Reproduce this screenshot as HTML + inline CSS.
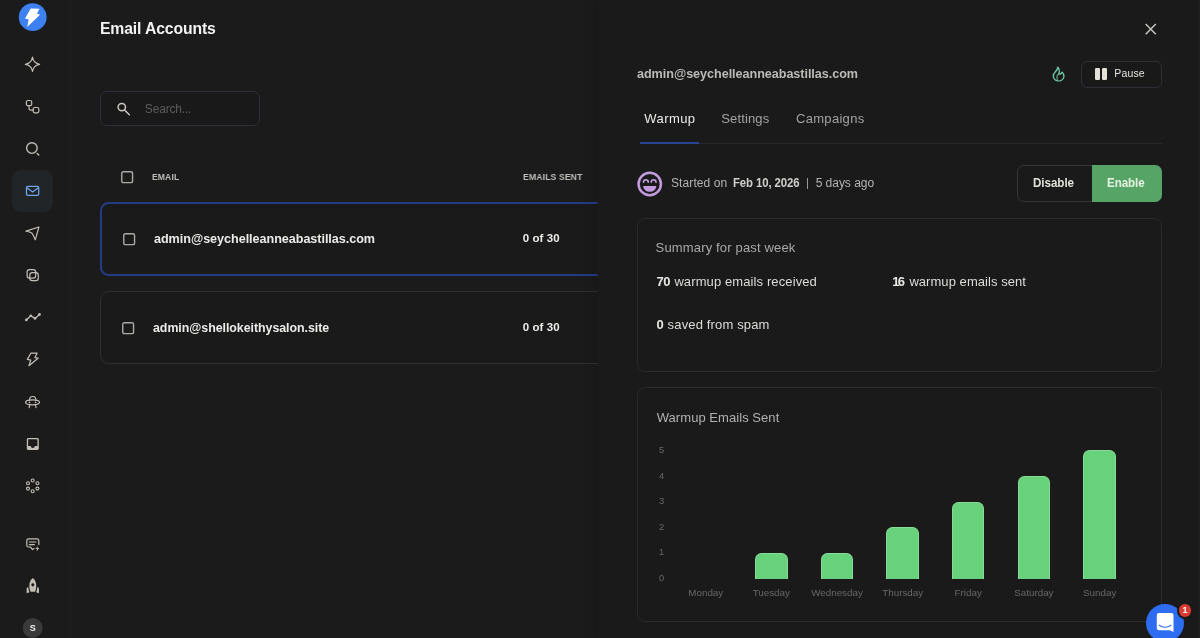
<!DOCTYPE html>
<html lang="en">
<head>
<meta charset="utf-8">
<title>Email Accounts</title>
<style>
*{box-sizing:border-box;margin:0;padding:0}
html,body{width:1200px;height:638px;overflow:hidden;background:#1b1b1b;font-family:"Liberation Sans",sans-serif;color:#e8e8e8}
#app{position:relative;width:1200px;height:638px;overflow:hidden;will-change:transform}
.t{position:absolute;white-space:nowrap;line-height:1}
.a{position:absolute}
#side{position:absolute;left:0;top:0;width:72px;height:638px;background:linear-gradient(90deg,#1b1b1b 0,#1b1b1b 68px,#1d1d1d 68px,#1d1d1d 72px)}
#sideicons{position:absolute;left:0;top:0;width:69px;height:638px}
#search{position:absolute;left:100px;top:91px;width:160px;height:35px;border:1px solid #2e313a;border-radius:7px;background:#191919}
.cb{position:absolute;width:12.5px;height:12.5px;border:1.500px solid #b3afa8;border-radius:2px}
.row{position:absolute;left:100px;width:520px;border-radius:8.500px;background:#1a1a1a}
#panel{position:absolute;left:598px;top:0;width:602px;height:638px;background:#1a1a1a;box-shadow:-3px 0 12px rgba(0,0,0,.14)}
.card{position:absolute;left:636.5px;width:525.5px;border:1px solid #292b31;border-radius:8px;background:#1a1a1a}
.ax{position:absolute;white-space:nowrap;line-height:1;font-size:9.3px;color:#686868}
.xl{transform:translateX(-50%);font-size:9.800px}
.bar{position:absolute;width:32.6px;background:#67d17b;border:1px solid #86dc96;border-bottom:none;border-radius:6.5px 6.5px 0 0}
</style>
</head>
<body>
<div id="app">

<!-- ============ SIDEBAR ============ -->
<div id="side"></div>
<svg id="sideicons" viewBox="0 0 69 638" fill="none" stroke-linecap="round" stroke-linejoin="round">
  <!-- logo -->
  <circle cx="32.7" cy="17.2" r="13.9" fill="#3d80f0"/>
  <polygon points="30.7,8.5 39.5,8.7 37,13.5 40,14.7 27.2,27 28.7,19.4 25,18.5" fill="#ffffff"/>
  <g stroke="#c2beb7" stroke-width="1.200">
    <!-- sparkle -->
    <path d="M32.5 57.2C33.2 61.6 35.2 63.6 39.6 64.3C35.2 65 33.2 67 32.5 71.4C31.8 67 29.800 65 25.400 64.300C29.8 63.6 31.8 61.6 32.5 57.2Z"/>
    <!-- flow -->
    <rect x="26.4" y="100.500" width="5.300" height="5.200" rx="1.500"/>
    <rect x="33.200" y="107.500" width="5.600" height="5.300" rx="1.500"/>
    <path d="M29 105.800V108.300Q29 110.200 30.900 110.200H33.200"/>
    <!-- search -->
    <circle cx="31.900" cy="148.100" r="5.300" stroke-width="1.400"/>
    <path d="M37.200 153.500L38.800 155" stroke-width="1.400"/>
    <!-- send -->
    <path d="M38.900 227L25.900 231.100Q30.400 231.900 31.700 232.900Q33.400 235 35.300 239.800Z"/>
    <!-- copy -->
    <rect x="27.100" y="269.700" width="8.600" height="8.400" rx="2.400"/>
    <rect x="29.800" y="272.600" width="8.500" height="8" rx="2.400"/>
    <!-- chart -->
    <path d="M26.300 319.900L30.800 315.700L35 318.400L39.500 314.400" stroke-width="1.300"/>
    <!-- bolt outline -->
    <path d="M30.800 353.200H37.100L34.900 357.600L38.100 358.200L28.900 365.700L30.800 360.100L27.300 359.400Z" stroke-width="1.200"/>
    <!-- ufo -->
    <ellipse cx="32.550" cy="402.300" rx="7" ry="2.500"/>
    <path d="M29.500 400.300C29.500 397.700 30.800 396.500 32.700 396.500C34.600 396.500 35.900 397.700 35.900 400.300"/>
    <path d="M29.700 404.900L29.200 407.700M35.400 404.900L36.100 407.700"/>
    <!-- dots -->
    <g stroke-width="1.100">
      <circle cx="32.700" cy="480.500" r="1.500"/><circle cx="37.400" cy="483.200" r="1.500"/><circle cx="37.400" cy="488.600" r="1.500"/>
      <circle cx="32.700" cy="491.200" r="1.500"/><circle cx="28" cy="488.600" r="1.500"/><circle cx="28" cy="483.200" r="1.500"/>
    </g>
    <!-- chat bolt -->
    <path d="M38.800 544.400V540.600Q38.800 538.800 37 538.800H28.600Q26.800 538.800 26.800 540.600V545.200Q26.800 547 28.600 547H30.400L32.600 549.600L34 548.600"/>
    <path d="M29.400 542H35.800M29.400 544.700H34.400" stroke-width="1.200"/>
  </g>
  <g fill="#c2beb7">
    <circle cx="26.300" cy="319.900" r="1.300"/><circle cx="30.800" cy="315.700" r="1.300"/><circle cx="35" cy="318.400" r="1.300"/><circle cx="39.500" cy="314.400" r="1.300"/>
    <circle cx="29.500" cy="402.400" r=".8"/><circle cx="35.600" cy="402.400" r=".8"/>
    <polygon points="37.700,545.900 35.400,549 37.100,549 36.500,551.400 39.300,547.900 37.500,547.900"/>
    <!-- inbox -->
    <path transform="translate(24.800 435.900) scale(.6667)" d="M19 3H4.990c-1.110 0-1.980.890-1.980 2L3 19c0 1.100.880 2 1.990 2H19c1.100 0 2-.9 2-2V5c0-1.110-.9-2-2-2zm0 12h-4c0 1.660-1.350 3-3 3s-3-1.340-3-3H4.990V5H19v10z"/>
    <!-- rocket -->
    <path transform="translate(23.560 576.400) scale(.77)" fill-rule="evenodd" d="M12 2.500s4.500 2.040 4.500 10.500c0 2.490-1.040 5.570-1.600 7H9.100c-.560-1.430-1.600-4.510-1.600-7C7.500 4.540 12 2.500 12 2.500zm2 8.500c0-1.100-.9-2-2-2s-2 .9-2 2 .9 2 2 2 2-.9 2-2zm-6.310 9.520c-.480-1.230-1.520-4.170-1.670-6.870l-1.130.75c-.560.380-.890 1-.890 1.670V22l3.690-1.480zM20 22v-5.930c0-.67-.33-1.290-.89-1.660l-1.130-.75c-.15 2.690-1.200 5.640-1.670 6.870L20 22z"/>
  </g>
  <!-- active mail -->
  <rect x="12" y="170" width="41" height="42" rx="9" fill="#222527"/>
  <g stroke="#6fa6ee" stroke-width="1.250">
    <rect x="26.500" y="186.400" width="12.200" height="8.900" rx="1.400"/>
    <path d="M26.900 187.700L32.600 191.900L38.300 187.700"/>
  </g>
  <!-- avatar -->
  <circle cx="32.700" cy="628" r="10" fill="#3a3a3a"/>
  <text x="32.700" y="631.200" text-anchor="middle" font-family="Liberation Sans, sans-serif" font-size="9" font-weight="700" fill="#f0f0f0">S</text>
</svg>

<!-- ============ MAIN LIST ============ -->
<div class="t" style="left:99.82px;top:21.3px;font-size:16.8px;font-weight:700;letter-spacing:-0.15px;transform-origin:0 0;transform:scaleX(0.9387);color:#f2f2f2">Email Accounts</div>
<div id="search"></div>
<svg class="a" style="left:116px;top:101px;width:16px;height:16px" viewBox="0 0 16 16" fill="none" stroke="#cac7c1" stroke-width="1.500"><circle cx="5.800" cy="6.100" r="3.700"/><path d="M8.600 9L13.300 13.700" stroke-linecap="round"/></svg>
<div class="t" style="left:144.85px;top:103.0px;font-size:12px;font-weight:400;letter-spacing:-0.182px;color:#5c5c5c">Search...</div>

<svg class="a" style="left:120.0px;top:170.0px;width:15px;height:15px" viewBox="0 0 15 15" fill="none" stroke="#abaaa6" stroke-width="1.400"><rect x="1.750" y="1.750" width="10.800" height="10.900" rx="1.500"/></svg>
<div class="t" style="left:152.4px;top:172.0px;font-size:9.5px;font-weight:700;letter-spacing:0.1px;transform-origin:0 0;transform:scaleX(0.9078);color:#bdbcb8">EMAIL</div>
<div class="t" style="left:522.7px;top:172.0px;font-size:9.5px;font-weight:700;letter-spacing:0.1px;transform-origin:0 0;transform:scaleX(0.9152);color:#bdbcb8">EMAILS SENT</div>

<div class="row" id="row1" style="top:201.800px;height:73.800px;border:2px solid #223c85"></div>
<svg class="a" style="left:121.5px;top:231.7px;width:15px;height:15px" viewBox="0 0 15 15" fill="none" stroke="#abaaa6" stroke-width="1.400"><rect x="1.750" y="1.750" width="10.800" height="10.900" rx="1.500"/></svg>
<div class="t" style="left:153.9px;top:231.9px;font-size:13px;font-weight:700;letter-spacing:-0.05px;transform-origin:0 0;transform:scaleX(0.9702);color:#ecebe8">admin@seychelleanneabastillas.com</div>
<div class="t" style="left:522.71px;top:233.1px;font-size:11.5px;font-weight:700;letter-spacing:0.075px;color:#ecebe8">0 of 30</div>

<div class="row" id="row2" style="top:291px;height:73px;border:1px solid #2e3034"></div>
<svg class="a" style="left:120.8px;top:320.7px;width:15px;height:15px" viewBox="0 0 15 15" fill="none" stroke="#abaaa6" stroke-width="1.400"><rect x="1.750" y="1.750" width="10.800" height="10.900" rx="1.500"/></svg>
<div class="t" style="left:152.6px;top:321.0px;font-size:13px;font-weight:700;letter-spacing:-0.05px;transform-origin:0 0;transform:scaleX(0.9539);color:#ecebe8">admin@shellokeithysalon.site</div>
<div class="t" style="left:522.71px;top:322.2px;font-size:11.5px;font-weight:700;letter-spacing:0.075px;color:#ecebe8">0 of 30</div>

<!-- ============ PANEL ============ -->
<div id="panel"></div>
<svg class="a" style="left:1144px;top:22px;width:14px;height:14px" viewBox="0 0 14 14" stroke="#c2c1bd" stroke-width="1.600" stroke-linecap="butt"><path d="M1.700 2L11.800 12.200M11.800 2L1.700 12.200"/></svg>
<div class="t" style="left:636.8px;top:67.2px;font-size:13px;font-weight:700;letter-spacing:-0.05px;transform-origin:0 0;transform:scaleX(0.9702);color:#bcbbb6">admin@seychelleanneabastillas.com</div>
<!-- fire -->
<svg class="a" style="left:1047.680px;top:64.280px;width:21.240px;height:19.440px" viewBox="0 0 24 24" preserveAspectRatio="none" fill="none" stroke="#6fcfab" stroke-width="1.500" stroke-linecap="round" stroke-linejoin="round"><path d="M12 12c2-2.960 0-7-1-8 0 3.038-1.773 4.741-3 6-1.226 1.260-2 3.240-2 5a6 6 0 1 0 12 0c0-1.532-1.056-3.940-2-5-1.786 3-2.791 3-4 2z"/><path d="M12 12C11.200 13.600 10.200 14 10.200 15.300C10.200 17 10.300 18.600 10.700 20.200" stroke-width="1.300" stroke-opacity=".8"/></svg>
<!-- pause button -->
<div class="a" style="left:1081px;top:61px;width:81px;height:26.600px;border:1px solid #2d3037;border-radius:6px;background:#191919"></div>
<div class="a" style="left:1094.900px;top:68.300px;width:5.200px;height:11.800px;background:#e4e1d9;border-radius:1.200px"></div>
<div class="a" style="left:1102.200px;top:68.300px;width:5.200px;height:11.800px;background:#e4e1d9;border-radius:1.200px"></div>
<div class="t" style="left:1114.33px;top:68.2px;font-size:10.5px;font-weight:400;letter-spacing:0.122px;color:#e4e3df">Pause</div>

<!-- tabs -->
<div class="t" style="left:644.36px;top:111.8px;font-size:13px;font-weight:400;letter-spacing:0.398px;color:#ecebe8">Warmup</div>
<div class="t" style="left:721.2px;top:111.8px;font-size:13px;font-weight:400;letter-spacing:0.146px;color:#a3a3a3">Settings</div>
<div class="t" style="left:795.96px;top:111.8px;font-size:13px;font-weight:400;letter-spacing:0.312px;color:#a3a3a3">Campaigns</div>
<div class="a" style="left:640px;top:143.100px;width:522px;height:1.300px;background:#27282b"></div>
<div class="a" style="left:640px;top:141.500px;width:58.700px;height:2.500px;background:#274594"></div>

<!-- started row -->
<svg class="a" style="left:634.500px;top:168.700px;width:30px;height:30px" viewBox="0 0 24 24" fill="none" stroke="#c39ce0" stroke-linecap="round">
  <circle cx="11.800" cy="12" r="8.950" stroke-width="2"/>
  <path d="M6.800 10.600A1.900 2 0 0 1 10.600 10.600M13 10.600A1.900 2 0 0 1 16.800 10.600" stroke-width="1.300"/>
  <path d="M6.500 13.600H17.100A5.300 4.700 0 0 1 6.500 13.600Z" fill="#c39ce0" stroke="none"/>
</svg>
<div class="t" style="left:670.95px;top:176.8px;font-size:12px;font-weight:400;letter-spacing:0.109px;color:#b4b4b2">Started on</div>
<div class="t" style="left:732.81px;top:176.8px;font-size:12px;font-weight:700;letter-spacing:-0.1px;transform-origin:0 0;transform:scaleX(0.9485);color:#cfcecb">Feb 10, 2026</div>
<div class="a" style="left:807.200px;top:177.500px;width:1.200px;height:11px;background:#9a9a98"></div>
<div class="t" style="left:815.63px;top:176.8px;font-size:12px;font-weight:400;letter-spacing:-0.026px;color:#b4b4b2">5 days ago</div>

<!-- disable/enable -->
<div class="a" style="left:1017px;top:165px;width:145px;height:36.800px;border:1px solid #33363b;border-radius:7px;background:#1a1a1a"></div>
<div class="a" style="left:1091.500px;top:165px;width:70.500px;height:36.800px;border-radius:0 7px 7px 0;background:#57a566"></div>
<div class="t" style="left:1033.18px;top:176.8px;font-size:12px;font-weight:700;letter-spacing:-0.05px;transform-origin:0 0;transform:scaleX(0.9681);color:#e2e0da">Disable</div>
<div class="t" style="left:1107.3px;top:176.8px;font-size:12px;font-weight:700;letter-spacing:-0.05px;transform-origin:0 0;transform:scaleX(0.9632);color:#e6f3e2">Enable</div>

<!-- summary card -->
<div class="card" style="top:217.500px;height:154px"></div>
<div class="t" style="left:655.6px;top:241.1px;font-size:13px;font-weight:400;letter-spacing:0.159px;color:#a9a9a7">Summary for past week</div>
<div class="t" style="left:656.41px;top:275.3px;font-size:13px;font-weight:700;letter-spacing:-0.455px;color:#e9e8e5">70</div><div class="t" style="left:674.39px;top:275.3px;font-size:13px;font-weight:400;letter-spacing:0.108px;color:#dddcd9">warmup emails received</div>
<div class="t" style="left:892.18px;top:275.3px;font-size:13px;font-weight:700;letter-spacing:-1.682px;color:#e9e8e5">16</div><div class="t" style="left:909.39px;top:275.3px;font-size:13px;font-weight:400;letter-spacing:0.053px;color:#dddcd9">warmup emails sent</div>
<div class="t" style="left:656.41px;top:317.8px;font-size:13px;font-weight:700;letter-spacing:0px;color:#e9e8e5">0</div><div class="t" style="left:667.61px;top:317.8px;font-size:13px;font-weight:400;letter-spacing:0.152px;color:#dddcd9">saved from spam</div>

<!-- chart card -->
<div class="card" style="top:387.300px;height:234.500px"></div>
<div class="t" style="left:656.76px;top:411.0px;font-size:13px;font-weight:400;letter-spacing:0.053px;color:#b1b1af">Warmup Emails Sent</div>
<div class="ax" style="left:659px;top:445.800px">5</div>
<div class="ax" style="left:659px;top:471.500px">4</div>
<div class="ax" style="left:659px;top:496.900px">3</div>
<div class="ax" style="left:659px;top:522.600px">2</div>
<div class="ax" style="left:659px;top:548.200px">1</div>
<div class="ax" style="left:659px;top:573.900px">0</div>

<div class="bar" style="left:755px;top:552.900px;height:26px"></div>
<div class="bar" style="left:820.700px;top:552.900px;height:26px"></div>
<div class="bar" style="left:886.400px;top:527.200px;height:51.700px"></div>
<div class="bar" style="left:951.900px;top:501.500px;height:77.400px"></div>
<div class="bar" style="left:1017.600px;top:475.800px;height:103.100px"></div>
<div class="bar" style="left:1083.400px;top:450.100px;height:128.800px"></div>

<div class="ax xl" style="left:705.800px;top:588px">Monday</div>
<div class="ax xl" style="left:771.300px;top:588px">Tuesday</div>
<div class="ax xl" style="left:837px;top:588px">Wednesday</div>
<div class="ax xl" style="left:902.700px;top:588px">Thursday</div>
<div class="ax xl" style="left:968.200px;top:588px">Friday</div>
<div class="ax xl" style="left:1033.900px;top:588px">Saturday</div>
<div class="ax xl" style="left:1099.700px;top:588px">Sunday</div>

<div class="a" style="left:1198px;top:0;width:2px;height:638px;background:#1f1f1f"></div>
<!-- chat widget -->
<div class="a" style="left:1146px;top:603.900px;width:38px;height:38px;border-radius:50%;background:#2e6df0"></div>
<svg class="a" style="left:1154px;top:610px;width:24px;height:26px" viewBox="1154 610 24 26"><path d="M1158.900 613H1171.400Q1173.500 613 1173.500 615.100V631.900L1169.600 630.300H1158.900Q1156.800 630.300 1156.800 628.200V615.100Q1156.800 613 1158.900 613Z" fill="#fff"/><path d="M1159.200 625.200Q1165.100 629.200 1171 625.200" fill="none" stroke="#2e6df0" stroke-width="1.100" stroke-linecap="round"/></svg>
<div class="a" style="left:1176.500px;top:602px;width:16.600px;height:16.600px;border-radius:50%;background:#1a1a1a"></div>
<div class="a" style="left:1178.500px;top:603.900px;width:12.800px;height:12.800px;border-radius:50%;background:#da3a30"></div>
<div class="t" style="left:1178.500px;top:605.800px;width:12.800px;text-align:center;font-size:9px;font-weight:700;color:#fff">1</div>

</div>
</body>
</html>
